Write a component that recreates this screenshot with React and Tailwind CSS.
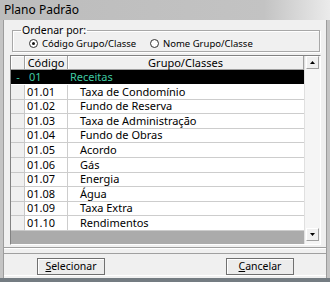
import React from 'react';

const rows = [
  ['01.01', 'Taxa de Condomínio'],
  ['01.02', 'Fundo de Reserva'],
  ['01.03', 'Taxa de Administração'],
  ['01.04', 'Fundo de Obras'],
  ['01.05', 'Acordo'],
  ['01.06', 'Gás'],
  ['01.07', 'Energia'],
  ['01.08', 'Água'],
  ['01.09', 'Taxa Extra'],
  ['01.10', 'Rendimentos'],
];

const Radio = ({ checked, label, className }) => (
  <div className={`flex items-center gap-[4px] shrink-0 ${className}`}>
    <span className="w-[9px] h-[9px] shrink-0 rounded-full border border-[#333] bg-white flex items-center justify-center">
      {checked && <span className="w-[3px] h-[3px] rounded-full bg-[#111]" />}
    </span>
    <span className="whitespace-nowrap">{label}</span>
  </div>
);

const ScrollButton = ({ up }) => (
  <div className="h-[13px] mx-[1px] bg-[#f0f0f0] border border-t-white border-l-white border-r-[#a0a0a0] border-b-[#a0a0a0] flex items-center justify-center">
    <svg width="5" height="3" viewBox="0 0 5 3">
      {up ? <path d="M2.5 0 L5 3 L0 3 Z" fill="#000" /> : <path d="M0 0 L5 0 L2.5 3 Z" fill="#000" />}
    </svg>
  </div>
);

export default function App() {
  return (
    <div className="w-[330px] h-[282px] flex flex-col bg-[#c4c4c4] text-black overflow-hidden font-['Noto_Sans',sans-serif]">
      {/* title bar */}
      <div className="h-[20px] shrink-0 flex items-center pl-[4px] text-[12px] bg-gradient-to-r from-[#bcbcbc] via-[#c3c3c3] via-80% to-[#ebebeb]">
        Plano Padrão
      </div>

      {/* client area */}
      <div className="flex-1 mx-[3px] flex flex-col bg-[#f0f0f0] border-x border-[#9c9c9c]">
        <div className="h-[228px] shrink-0 flex flex-col border-b border-[#a0a0a0] shadow-[0_1px_0_#fff]">
          <fieldset className="ml-[8px] mt-[4px] w-[308px] border border-[#a8a8a8] shadow-[inset_1px_1px_0_#fff,1px_1px_0_#fff]">
            <legend className="ml-[8px] px-[1px] text-[10.5px] leading-[12px]">Ordenar por:</legend>
            <div className="h-[15px] flex items-center pl-[16px] text-[9.5px] leading-none">
              <Radio checked label="Código Grupo/Classe" className="w-[121px]" />
              <Radio label="Nome Grupo/Classe" />
            </div>
          </fieldset>

          {/* grid */}
          <div className="ml-[6px] mt-[3px] w-[311px] h-[190px] flex border border-t-[#828282] border-l-[#828282] border-r-white border-b-white bg-[#f0f0f0] text-[11px]">
            <div className="w-[293px] flex flex-col">
              <div className="h-[14px] flex leading-[13px] bg-[#f0f0f0]">
                <div className="w-[14px] border-r border-b border-[#a0a0a0] shadow-[inset_1px_1px_0_#fff]" />
                <div className="w-[43px] border-r border-b border-[#a0a0a0] text-center shadow-[inset_1px_1px_0_#fff]">Código</div>
                <div className="flex-1 border-r border-b border-[#a0a0a0] text-center shadow-[inset_1px_1px_0_#fff]">Grupo/Classes</div>
              </div>
              <div className="h-[15px] flex items-center bg-black text-[#3fc9a2] border-b border-white">
                <div className="w-[14px] text-center">-</div>
                <div className="w-[43px] pl-[4px]">01</div>
                <div className="flex-1 pl-[2px]">Receitas</div>
              </div>
              {rows.map(([code, name]) => (
                <div key={code} className="h-[14.6px] flex">
                  <div className="w-[14px] bg-[#f0f0f0] border-r border-b border-[#c8c8c8]" />
                  <div className="w-[43px] pl-[2px] bg-white border-r border-b border-[#cdcdcd] flex items-center">{code}</div>
                  <div className="flex-1 pl-[12px] bg-white border-b border-[#cdcdcd] flex items-center">{name}</div>
                </div>
              ))}
              <div className="flex-1 bg-[#ababab]" />
            </div>
            <div className="flex-1 flex flex-col justify-between bg-[#f5f5f5] border-l border-[#e0e0e0]">
              <ScrollButton up />
              <div className="mb-[3px]">
                <ScrollButton />
              </div>
            </div>
          </div>
        </div>

        {/* buttons */}
        <div className="mt-[5px] h-[23px] shrink-0 flex items-start pt-[4px] border-t border-[#a0a0a0] border-b border-b-white text-[10.5px]">
          <button className="ml-[33px] w-[68px] h-[17px] border border-[#707070] bg-[#ececec] shadow-[inset_1px_1px_0_#fff] leading-none">
            <span className="underline">S</span>elecionar
          </button>
          <button className="ml-auto mr-[32px] w-[68px] h-[17px] border border-[#707070] bg-[#ececec] shadow-[inset_1px_1px_0_#fff] leading-none">
            <span className="underline">C</span>ancelar
          </button>
        </div>
      </div>
      <div className="h-[4px] shrink-0 bg-[#747c82]" />
    </div>
  );
}
